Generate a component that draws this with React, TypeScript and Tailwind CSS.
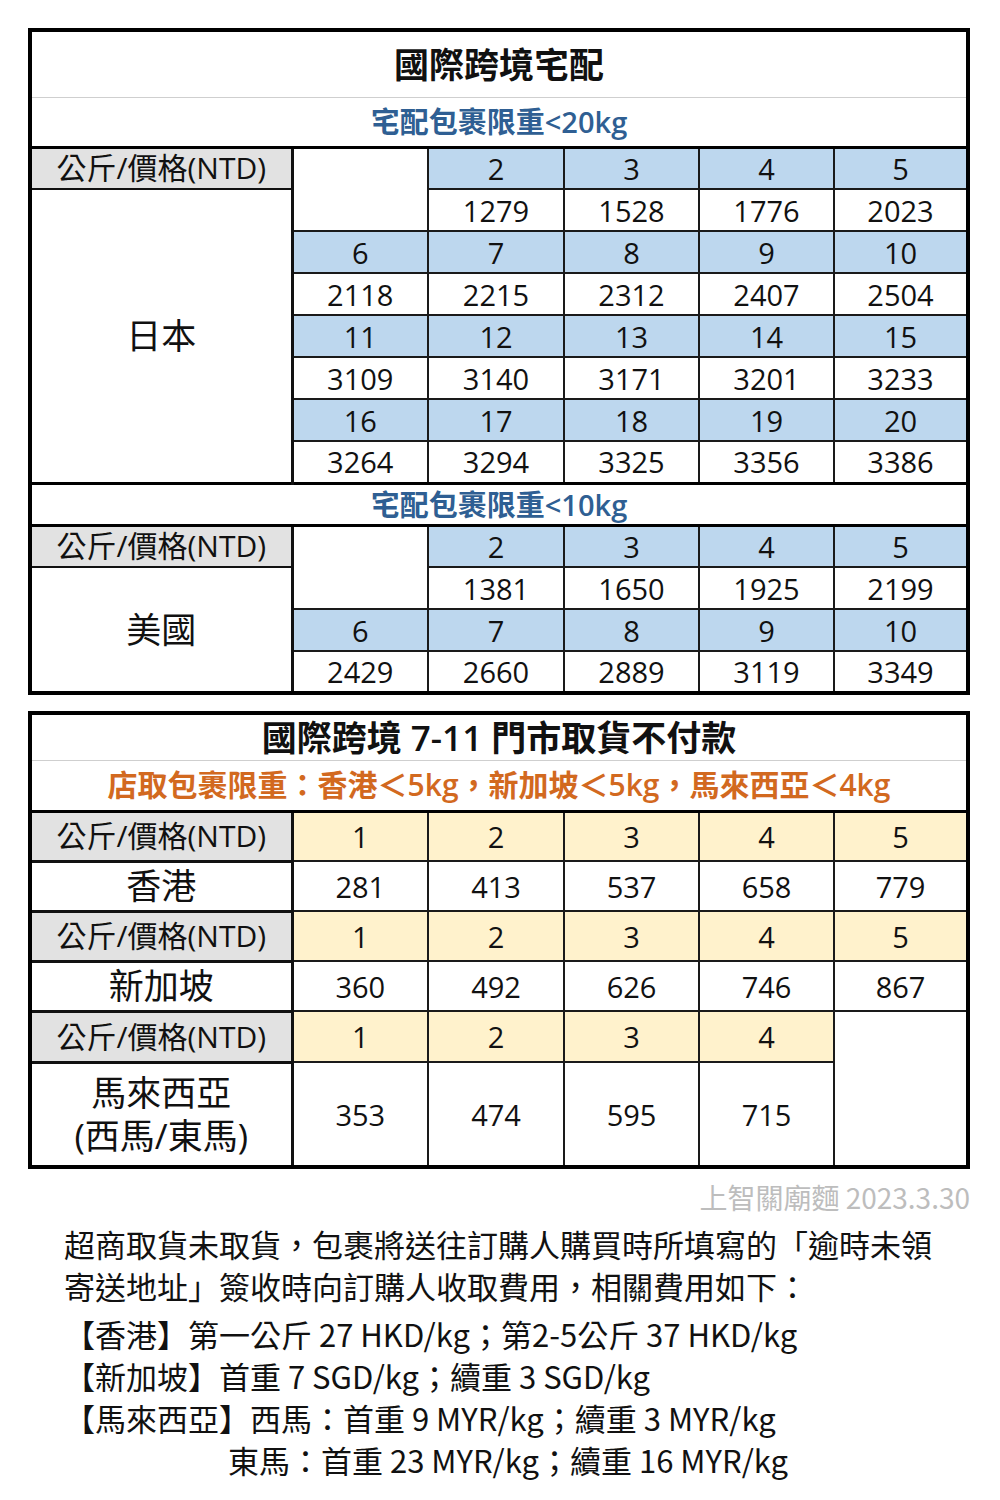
const tableFont = { fontFamily: '"Open Sans","Noto Sans CJK TC",sans-serif' };

const japanRows = [
  ["6", "7", "8", "9", "10"],
  ["2118", "2215", "2312", "2407", "2504"],
  ["11", "12", "13", "14", "15"],
  ["3109", "3140", "3171", "3201", "3233"],
  ["16", "17", "18", "19", "20"],
  ["3264", "3294", "3325", "3356", "3386"],
];

const cell = "border-2 border-[#1a1a1a] text-center align-middle p-0 leading-none";
const blue = `${cell} bg-[#bdd7ee]`;
const white = `${cell} bg-white`;
const label = "border-2 border-r-[3px] border-[#111] bg-[#e2e2e2] text-center align-middle p-0 leading-none text-[30px]";
const country = "border-2 border-r-[3px] border-[#111] bg-white text-center align-middle p-0 leading-tight text-[35px]";
const yellow = `${cell} bg-[#fff2cc]`;

function Cols() {
  return (
    <colgroup>
      <col className="w-[262px]" />
      <col className="w-[136px]" />
      <col className="w-[136px]" />
      <col className="w-[135px]" />
      <col className="w-[135px]" />
      <col />
    </colgroup>
  );
}

function HomeDelivery() {
  return (
    <table
      className="w-[942px] table-fixed border-collapse border-4 border-black text-[29px] text-[#111]"
      style={tableFont}
    >
      <Cols />
      <tbody>
        <tr className="h-[67px]">
          <td colSpan={6} className="border-b border-b-[#cfcfcf] p-0 text-center align-middle text-[35px] leading-none font-semibold">
            國際跨境宅配
          </td>
        </tr>
        <tr className="h-[50px]">
          <td colSpan={6} className="border-b-[3px] border-b-black p-0 text-center align-middle text-[29px] leading-none font-semibold text-[#2f5f93]">
            宅配包裹限重&lt;20kg
          </td>
        </tr>
        <tr className="h-[42px]">
          <td className={label}>公斤/價格(NTD)</td>
          <td rowSpan={2} className={white}></td>
          <td className={blue}>2</td>
          <td className={blue}>3</td>
          <td className={blue}>4</td>
          <td className={blue}>5</td>
        </tr>
        <tr className="h-[42px]">
          <td rowSpan={7} className={country}>日本</td>
          <td className={white}>1279</td>
          <td className={white}>1528</td>
          <td className={white}>1776</td>
          <td className={white}>2023</td>
        </tr>
        {japanRows.map((row, i) => (
          <tr key={i} className="h-[42px]">
            {row.map((v) => (
              <td key={v} className={i % 2 === 0 ? blue : white}>
                {v}
              </td>
            ))}
          </tr>
        ))}
        <tr className="h-[42px]">
          <td colSpan={6} className="border-y-[3px] border-y-black p-0 text-center align-middle text-[29px] leading-none font-semibold text-[#2f5f93]">
            宅配包裹限重&lt;10kg
          </td>
        </tr>
        <tr className="h-[42px]">
          <td className={label}>公斤/價格(NTD)</td>
          <td rowSpan={2} className={white}></td>
          <td className={blue}>2</td>
          <td className={blue}>3</td>
          <td className={blue}>4</td>
          <td className={blue}>5</td>
        </tr>
        <tr className="h-[42px]">
          <td rowSpan={3} className={country}>美國</td>
          <td className={white}>1381</td>
          <td className={white}>1650</td>
          <td className={white}>1925</td>
          <td className={white}>2199</td>
        </tr>
        <tr className="h-[42px]">
          {["6", "7", "8", "9", "10"].map((v) => (
            <td key={v} className={blue}>{v}</td>
          ))}
        </tr>
        <tr className="h-[42px]">
          {["2429", "2660", "2889", "3119", "3349"].map((v) => (
            <td key={v} className={white}>{v}</td>
          ))}
        </tr>
      </tbody>
    </table>
  );
}

const stores = [
  { name: "香港", prices: ["281", "413", "537", "658", "779"] },
  { name: "新加坡", prices: ["360", "492", "626", "746", "867"] },
];

function StorePickup() {
  return (
    <table
      className="w-[942px] table-fixed border-collapse border-4 border-black text-[29px] text-[#111]"
      style={tableFont}
    >
      <Cols />
      <tbody>
        <tr className="h-[47px]">
          <td colSpan={6} className="border-b border-b-[#cfcfcf] p-0 text-center align-middle text-[35px] leading-none font-semibold">
            國際跨境 7-11 門市取貨不付款
          </td>
        </tr>
        <tr className="h-[51px]">
          <td colSpan={6} className="border-b-[3px] border-b-black p-0 text-center align-middle text-[30px] leading-none font-semibold text-[#d2691f]">
            店取包裹限重：香港＜5kg，新加坡＜5kg，馬來西亞＜4kg
          </td>
        </tr>
        {stores.map((s) => (
          <>
            <tr key={s.name + "h"} className="h-[50px]">
              <td className={`${label} border-b-[3px]`}>公斤/價格(NTD)</td>
              {["1", "2", "3", "4", "5"].map((v) => (
                <td key={v} className={yellow}>{v}</td>
              ))}
            </tr>
            <tr key={s.name} className="h-[50px]">
              <td className={`${country} border-b-[3px]`}>{s.name}</td>
              {s.prices.map((v) => (
                <td key={v} className={white}>{v}</td>
              ))}
            </tr>
          </>
        ))}
        <tr className="h-[51px]">
          <td className={`${label} border-b-[3px]`}>公斤/價格(NTD)</td>
          {["1", "2", "3", "4"].map((v) => (
            <td key={v} className={yellow}>{v}</td>
          ))}
          <td rowSpan={2} className={white}></td>
        </tr>
        <tr className="h-[105px]">
          <td className={country}>
            馬來西亞
            <br />
            (西馬/東馬)
          </td>
          {["353", "474", "595", "715"].map((v) => (
            <td key={v} className={white}>{v}</td>
          ))}
        </tr>
      </tbody>
    </table>
  );
}

export default function App() {
  return (
    <div className="min-h-[1500px] w-[1000px] bg-white pt-[28px]" style={{ fontFamily: '"Noto Sans CJK TC",sans-serif' }}>
      <div className="flex flex-col gap-[16px] px-[28px]">
        <HomeDelivery />
        <StorePickup />
      </div>
      <div className="mt-[10px] pr-[30px] text-right text-[28px] leading-[36px] text-[#bdbdbd]">
        上智關廟麵 2023.3.30
      </div>
      <div className="mt-[8px] pl-[64px] text-[31px] leading-[42px] text-[#111]">
        <p>超商取貨未取貨，包裹將送往訂購人購買時所填寫的「逾時未領</p>
        <p>寄送地址」簽收時向訂購人收取費用，相關費用如下：</p>
        <div className="mt-[6px]">
          <p>【香港】第一公斤 27 HKD/kg；第2-5公斤 37 HKD/kg</p>
          <p>【新加坡】首重 7 SGD/kg；續重 3 SGD/kg</p>
          <p>【馬來西亞】西馬：首重 9 MYR/kg；續重 3 MYR/kg</p>
          <p className="pl-[164px]">東馬：首重 23 MYR/kg；續重 16 MYR/kg</p>
        </div>
      </div>
    </div>
  );
}
